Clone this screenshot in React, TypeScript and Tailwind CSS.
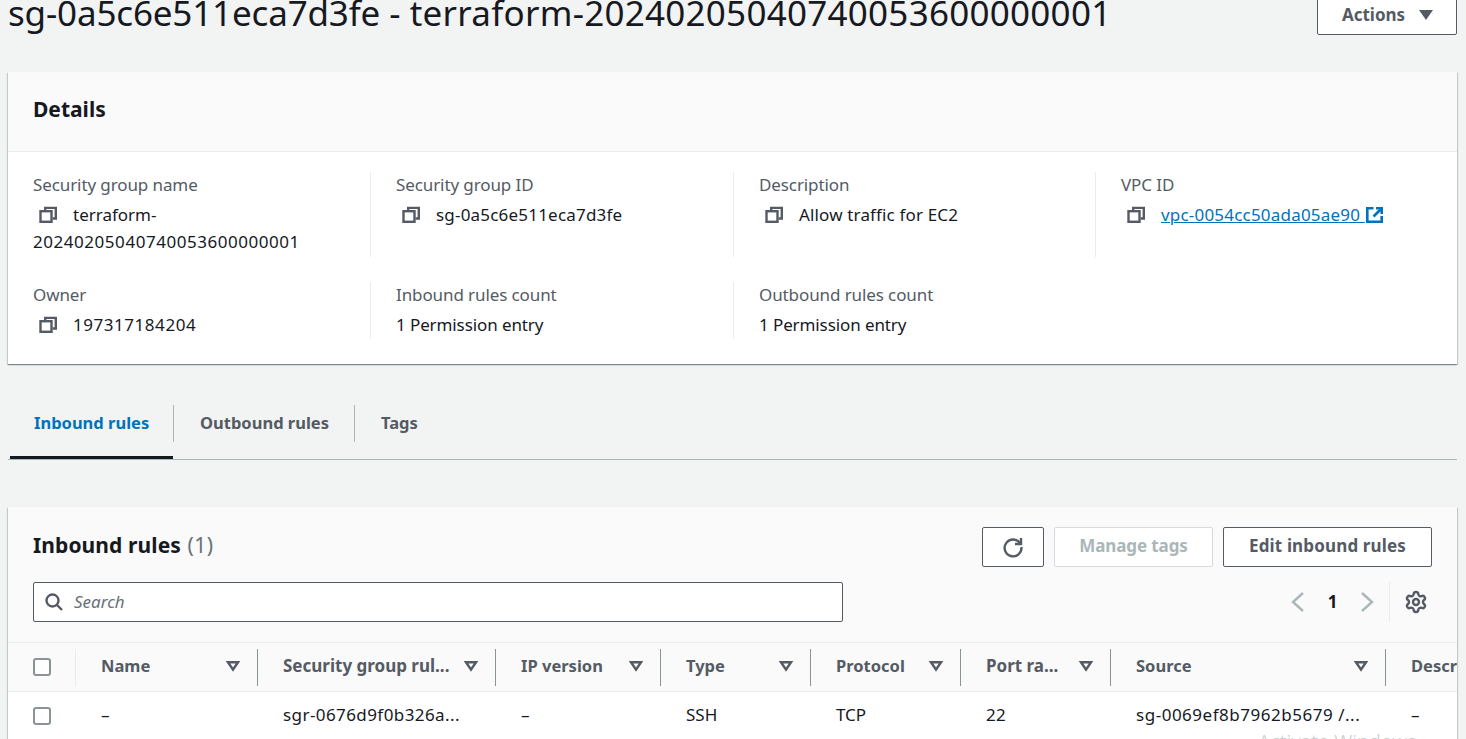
import { Settings } from "lucide-react";

const tableCols = "grid grid-cols-[67px_182px_238px_165px_150px_150px_150px_275px_1fr]";

function CopyIcon() {
  return (
    <svg className="w-[18px] h-[18px] shrink-0 text-[#545b64]" viewBox="0 0 18 18" fill="none" stroke="currentColor" strokeWidth="2.4">
      <path d="M6.200 5V1.900H16.800V12.500H13.600" />
      <rect x="1.500" y="5.200" width="11" height="10.600" />
    </svg>
  );
}

function ExternalIcon() {
  return (
    <svg className="w-[18px] h-[18px] shrink-0 ml-px text-[#0073bb]" viewBox="0 0 18 18" fill="none" stroke="currentColor" strokeWidth="2.6">
      <path d="M7.500 2.300H1.300V15.700H15.700V10" />
      <path d="M10 2.300H15.700V8" />
      <path d="M15.500 2.500L7.500 10.500" />
    </svg>
  );
}

function SortIcon() {
  return (
    <svg className="w-[14px] h-[12px] text-[#545b64]" viewBox="0 0 14 12" fill="none" stroke="currentColor" strokeWidth="2.4" strokeLinejoin="miter">
      <path d="M2 2.200H12L7 9.600Z" />
    </svg>
  );
}

function Checkbox() {
  return <div className="w-[18px] h-[18px] rounded-[3px] border-2 border-[#879596] bg-white" />;
}

function Field({ label, className, children }: { label: string; className?: string; children: React.ReactNode }) {
  return (
    <div className={className}>
      <div className="text-[#545b64] leading-[26px] tracking-[-0.1px]">{label}</div>
      <div className="mt-[3px] leading-[27px]">{children}</div>
    </div>
  );
}

function CopyValue({ children }: { children: React.ReactNode }) {
  return (
    <div className="flex items-center gap-[16px] pl-[6px]">
      <CopyIcon />
      <span>{children}</span>
    </div>
  );
}

const columns = [
  { title: "Name", size: "text-[16.5px]" },
  { title: "Security group rul...", size: "text-[17px]" },
  { title: "IP version", size: "text-[16.5px]" },
  { title: "Type", size: "text-[16.5px]" },
  { title: "Protocol", size: "text-[16.5px]" },
  { title: "Port ra...", size: "text-[17px]" },
  { title: "Source", size: "text-[16.5px]" },
];

const row = [
  { text: "–", track: "" },
  { text: "sgr-0676d9f0b326a...", track: "tracking-[0.42px]" },
  { text: "–", track: "" },
  { text: "SSH", track: "" },
  { text: "TCP", track: "" },
  { text: "22", track: "tracking-[0.4px]" },
  { text: "sg-0069ef8b7962b5679 /...", track: "tracking-[0.52px]" },
];

export default function App() {
  return (
    <div className="relative h-[739px] overflow-hidden bg-[#f2f3f3] pl-2 pr-[9px] text-[17px] text-[#16191f] [font-family:'Noto_Sans',sans-serif]">
      {/* Page title, page is scrolled a little */}
      <div className="flex justify-between items-start h-10 -mt-[5px]">
        <h1 className="-mt-[2px] text-[35px] leading-[40px] font-normal whitespace-nowrap">
          <span className="tracking-[-0.16px]">sg-0a5c6e511eca7d3fe</span> - <span className="tracking-[0.26px]">terraform-20240205040740053600000001</span>
        </h1>
        <button className="flex items-center justify-center gap-[14px] w-[140px] h-10 pl-px bg-white border border-[#545b64] rounded-[2px] font-bold text-[#545b64]">
          Actions
          <svg className="w-[14px] h-[10px]" viewBox="0 0 14 10" fill="currentColor">
            <path d="M0 0H14L7 10Z" />
          </svg>
        </button>
      </div>

      {/* Details */}
      <section className="mt-[37px] h-[292px] bg-white shadow-[0_1px_1px_0_rgba(0,28,36,0.3),1px_1px_1px_0_rgba(0,28,36,0.15),-1px_1px_1px_0_rgba(0,28,36,0.15)]">
        <div className="h-20 flex items-center pl-[25px] pb-[3px] bg-[#fafafa] border-b border-[#eaeded]">
          <h2 className="text-[21px] font-bold">Details</h2>
        </div>
        <div className="pt-[20px] pl-[25px] grid grid-cols-[337px_363px_362px_1fr] grid-rows-[85px_57px] gap-y-[25px]">
          <Field label="Security group name">
            <CopyValue>terraform-</CopyValue>
            <div className="tracking-[0.54px]">20240205040740053600000001</div>
          </Field>
          <Field label="Security group ID" className="border-l border-[#eaeded] pl-[25px]">
            <CopyValue><span className="tracking-[0.2px]">sg-0a5c6e511eca7d3fe</span></CopyValue>
          </Field>
          <Field label="Description" className="border-l border-[#eaeded] pl-[25px]">
            <CopyValue><span className="tracking-[0.15px]">Allow traffic for EC2</span></CopyValue>
          </Field>
          <Field label="VPC ID" className="border-l border-[#eaeded] pl-[25px]">
            <div className="flex items-center gap-[16px] pl-[6px]">
              <CopyIcon />
              <a className="flex items-center text-[#0073bb]">
                <span className="underline whitespace-pre tracking-[0.2px]">vpc-0054cc50ada05ae90 </span>
                <ExternalIcon />
              </a>
            </div>
          </Field>
          <Field label="Owner">
            <CopyValue><span className="tracking-[0.54px]">197317184204</span></CopyValue>
          </Field>
          <Field label="Inbound rules count" className="border-l border-[#eaeded] pl-[25px]">
            <span className="tracking-[-0.1px]">1 Permission entry</span>
          </Field>
          <Field label="Outbound rules count" className="border-l border-[#eaeded] pl-[25px]">
            <span className="tracking-[-0.1px]">1 Permission entry</span>
          </Field>
        </div>
      </section>

      {/* Tabs */}
      <div className="mt-[41px] h-[55px] flex items-start border-b border-[#aab7b8] text-[16.5px] font-bold">
        <div className="ml-[2px] w-[163px] h-[54px] border-b-[3px] border-[#16191f]">
          <div className="h-[37px] pl-[24px] pb-[1px] flex items-center text-[#0073bb]">Inbound rules</div>
        </div>
        <div className="w-[181px] h-[37px] pl-[26px] pb-[1px] flex items-center border-l border-[#aab7b8] text-[#545b64]">Outbound rules</div>
        <div className="h-[37px] pl-[26px] pb-[1px] flex items-center border-l border-[#aab7b8] text-[#545b64]">Tags</div>
      </div>

      {/* Inbound rules table */}
      <section className="mt-[47px] h-[300px] bg-white shadow-[0_1px_1px_0_rgba(0,28,36,0.3),1px_1px_1px_0_rgba(0,28,36,0.15),-1px_1px_1px_0_rgba(0,28,36,0.15)]">
        <div className="h-[135px] bg-[#fafafa] pt-5 px-[25px]">
          <div className="flex items-start justify-between">
            <h2 className="mt-[3px] text-[21px] leading-[30px] font-bold tracking-[0.1px]">
              Inbound rules <span className="ml-px font-normal text-[#687078] tracking-[0.5px]">(1)</span>
            </h2>
            <div className="flex gap-[10px] font-bold">
              <button className="w-[62px] h-10 flex items-center justify-center bg-white border border-[#545b64] rounded-[2px] text-[#545b64]">
                <svg className="w-[22px] h-[22px]" viewBox="0 0 22 22" fill="none" stroke="currentColor" strokeWidth="2.400">
                  <path d="M18.200 7.500A8.400 8.400 0 1 0 19.400 11" />
                  <path d="M19 2V8H13" />
                </svg>
              </button>
              <button className="w-[159px] h-10 pb-[2px] bg-white border border-[#d5dbdb] rounded-[2px] text-[#aab7b8] tracking-[-0.1px]">Manage tags</button>
              <button className="w-[209px] h-10 pb-[2px] bg-white border border-[#545b64] rounded-[2px] text-[#545b64] tracking-[0.15px]">Edit inbound rules</button>
            </div>
          </div>
          <div className="mt-[15px] flex items-center justify-between">
            <div className="w-[810px] h-10 flex items-center gap-[11px] pl-[11px] bg-white border border-[#545b64] rounded-[2px]">
              <svg className="w-[18px] h-[18px] text-[#545b64]" viewBox="0 0 18 18" fill="none" stroke="currentColor" strokeWidth="2.400">
                <circle cx="7.500" cy="7.500" r="6" />
                <path d="M12 12L17 17" />
              </svg>
              <span className="italic text-[#687078]">Search</span>
            </div>
            <div className="flex items-center h-10 mr-[4px] text-[#16191f] font-bold">
              <svg className="w-[14px] h-[22px] text-[#aab7b8]" viewBox="0 0 14 22" fill="none" stroke="currentColor" strokeWidth="2.400">
                <path d="M12 2L2 11L12 20" />
              </svg>
              <span className="w-[55px] text-center">1</span>
              <svg className="w-[14px] h-[22px] text-[#aab7b8]" viewBox="0 0 14 22" fill="none" stroke="currentColor" strokeWidth="2.400">
                <path d="M2 2L12 11L2 20" />
              </svg>
              <div className="ml-[15px] h-10 w-[15px] border-l border-[#eaeded]" />
              <Settings className="w-6 h-6 text-[#545b64]" strokeWidth={2.4} />
            </div>
          </div>
        </div>

        <div className={`${tableCols} h-[50px] items-center bg-[#fafafa] border-y border-[#eaeded] font-bold text-[#545b64] overflow-hidden`}>
          <div className="pl-[25px] h-full flex items-center"><Checkbox /></div>
          {columns.map((c, i) => (
            <div key={c.title} className={`h-[37px] flex items-center justify-between pl-[25px] pr-[17px] pb-[2px] border-l ${c.size} ${i === 0 ? "border-[#eaeded]" : "border-[#879596]"}`}>
              <span className="whitespace-nowrap">{c.title}</span>
              <SortIcon />
            </div>
          ))}
          <div className="h-[37px] flex items-center pl-[25px] pb-[2px] border-l border-[#879596] text-[16.5px] whitespace-nowrap overflow-hidden">Description</div>
        </div>

        <div className={`${tableCols} h-[47px] pb-[2px] items-center overflow-hidden`}>
          <div className="pl-[25px] pt-[2px]"><Checkbox /></div>
          {row.map((v, i) => (
            <div key={i} className={`pl-[26px] whitespace-nowrap ${v.track}`}>{v.text}</div>
          ))}
          <div className="pl-[26px]">–</div>
        </div>
      </section>

      {/* Windows watermark */}
      <div className="absolute left-[1258px] top-[727px] text-[20px] font-light text-[#c9cccc] whitespace-nowrap">Activate Windows</div>
    </div>
  );
}
